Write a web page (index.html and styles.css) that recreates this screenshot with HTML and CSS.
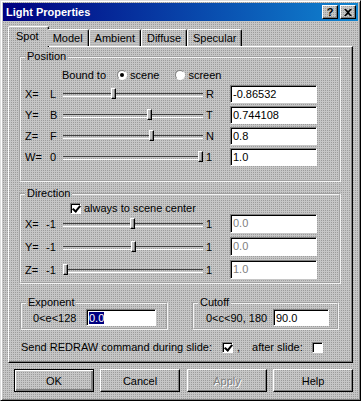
FILE: index.html
```html
<!DOCTYPE html>
<html lang="en">
<head>
    <meta charset="UTF-8">
    <title>Light Properties</title>
    <link rel="stylesheet" href="styles.css">
</head>
<body>
    <div class="window dither">
        <div class="titlebar">
            <span class="title">Light Properties</span>
            <div class="caption-btns">
                <span class="cap-btn dither">?</span>
                <span class="cap-btn dither close">
                    <svg width="8" height="7" viewBox="0 0 8 7"><path d="M0 0h2l2 2 2-2h2L5 3.5 8 7H6L4 5 2 7H0l3-3.5z" fill="#000"/></svg>
                </span>
            </div>
        </div>

        <div class="tabs">
            <div class="tab active dither">Spot</div>
            <div class="tab dither">Model</div>
            <div class="tab dither">Ambient</div>
            <div class="tab dither">Diffuse</div>
            <div class="tab dither">Specular</div>
        </div>

        <div class="panel dither">
            <fieldset class="group position">
                <legend>Position</legend>
                <div class="bound">
                    <span class="bound-label">Bound to</span>
                    <span class="radio checked"></span><span class="opt">scene</span>
                    <span class="radio"></span><span class="opt">screen</span>
                </div>
                <div class="row">
                    <span class="axis">X=</span><span class="lo">L</span>
                    <div class="slider"><span class="thumb" style="left:48px"></span></div>
                    <span class="hi">R</span>
                    <div class="field">-0.86532</div>
                </div>
                <div class="row">
                    <span class="axis">Y=</span><span class="lo">B</span>
                    <div class="slider"><span class="thumb" style="left:84px"></span></div>
                    <span class="hi">T</span>
                    <div class="field">0.744108</div>
                </div>
                <div class="row">
                    <span class="axis">Z=</span><span class="lo">F</span>
                    <div class="slider"><span class="thumb" style="left:86px"></span></div>
                    <span class="hi">N</span>
                    <div class="field">0.8</div>
                </div>
                <div class="row">
                    <span class="axis">W=</span><span class="lo">0</span>
                    <div class="slider"><span class="thumb" style="left:135px"></span></div>
                    <span class="hi">1</span>
                    <div class="field">1.0</div>
                </div>
            </fieldset>

            <fieldset class="group direction">
                <legend>Direction</legend>
                <div class="center-row">
                    <span class="check checked"></span><span class="opt">always to scene center</span>
                </div>
                <div class="row">
                    <span class="axis">X=</span><span class="lo">-1</span>
                    <div class="slider"><span class="thumb" style="left:67px"></span></div>
                    <span class="hi">1</span>
                    <div class="field disabled dither">0.0</div>
                </div>
                <div class="row">
                    <span class="axis">Y=</span><span class="lo">-1</span>
                    <div class="slider"><span class="thumb" style="left:68px"></span></div>
                    <span class="hi">1</span>
                    <div class="field disabled dither">0.0</div>
                </div>
                <div class="row">
                    <span class="axis">Z=</span><span class="lo">-1</span>
                    <div class="slider"><span class="thumb" style="left:0px"></span></div>
                    <span class="hi">1</span>
                    <div class="field disabled dither">1.0</div>
                </div>
            </fieldset>

            <div class="pair">
                <fieldset class="group small exponent">
                    <legend>Exponent</legend>
                    <div class="small-row">
                        <span class="range">0&lt;e&lt;128</span>
                        <div class="field"><span class="selected">0.0</span></div>
                    </div>
                </fieldset>
                <fieldset class="group small cutoff">
                    <legend>Cutoff</legend>
                    <div class="small-row">
                        <span class="range">0&lt;c&lt;90, 180</span>
                        <div class="field">90.0</div>
                    </div>
                </fieldset>
            </div>

            <div class="redraw">
                <span>Send REDRAW command during slide:</span>
                <span class="check checked during"></span>
                <span class="comma">,</span>
                <span>after slide:</span>
                <span class="check after"></span>
            </div>
        </div>

        <div class="buttons">
            <div class="btn default dither">OK</div>
            <div class="btn dither">Cancel</div>
            <div class="btn disabled dither">Apply</div>
            <div class="btn dither">Help</div>
        </div>
    </div>
</body>
</html>
```

FILE: styles.css
```css
* {
    margin: 0;
    padding: 0;
    box-sizing: border-box;
}

body {
    background-color: #c0c0c0;
    font-family: 'Liberation Sans', Arial, sans-serif;
    font-size: 11px;
    color: #000000;
}

.dither {
    background-color: #c6c6c6;
    background-image: conic-gradient(#9c9c9c 25%, transparent 0);
    background-size: 2px 2px;
    background-attachment: fixed;
}

.window {
    width: 361px;
    height: 401px;
    border: 1px solid;
    border-color: #dfdfdf #000000 #000000 #dfdfdf;
    box-shadow: inset 1px 1px 0 #ffffff, inset -1px -1px 0 #808080;
    padding: 2px;
    display: flex;
    flex-direction: column;
}

/* title bar */
.titlebar {
    height: 18px;
    flex-shrink: 0;
    background: linear-gradient(90deg, #000080, #1084d0);
    display: flex;
    align-items: center;
    justify-content: space-between;
    padding: 0 2px 0 3px;
}

.title {
    color: #ffffff;
    font-weight: bold;
    font-size: 11px;
}

.caption-btns {
    display: flex;
    gap: 2px;
}

.cap-btn {
    width: 16px;
    height: 14px;
    border: 1px solid;
    border-color: #ffffff #000000 #000000 #ffffff;
    box-shadow: inset -1px -1px 0 #808080;
    display: flex;
    align-items: center;
    justify-content: center;
    font-weight: bold;
    font-size: 11px;
    line-height: 1;
}

/* tabs */
.tabs {
    height: 25px;
    flex-shrink: 0;
    display: flex;
    align-items: flex-end;
    padding-left: 5px;
    position: relative;
    z-index: 1;
}

.tab {
    height: 17px;
    padding: 2px 5px 0 5px;
    border: 1px solid;
    border-bottom: none;
    border-color: #ffffff #000000 transparent #ffffff;
    border-radius: 2px 2px 0 0;
    box-shadow: inset -1px 0 0 #808080;
}

.tab.active {
    height: 21px;
    margin-bottom: -1px;
    padding: 3px 9px 0 7px;
    margin-right: -2px;
}

.tab.active + .tab {
    border-left: none;
    padding-left: 6px;
}

/* main panel */
.panel {
    margin: 0 5px;
    height: 317px;
    flex-shrink: 0;
    border: 1px solid;
    border-color: #ffffff #000000 #000000 #ffffff;
    box-shadow: inset -1px -1px 0 #808080;
    padding: 0 0 0 10px;
}

.group {
    border: 2px groove #f4f4f4;
    width: 322px;
}

.group legend {
    margin-left: 4px;
    padding: 0 2px;
    line-height: 13px;
}

.position {
    margin-top: 3px;
    padding: 5px 0 0 0;
    height: 132px;
}

.direction {
    margin-top: 5px;
    padding: 0;
    height: 97px;
}

.bound {
    display: flex;
    align-items: center;
    height: 14px;
    padding-left: 41px;
}

.bound-label {
    margin-right: 11px;
}

.opt {
    margin-left: 3px;
}

.radio + .opt + .radio {
    margin-left: 16px;
}

.radio {
    width: 10px;
    height: 10px;
    border-radius: 50%;
    border: 1px solid;
    border-color: #808080 #ffffff #ffffff #808080;
    background: #ffffff;
    position: relative;
}

.radio.checked::after {
    content: '';
    position: absolute;
    left: 2px;
    top: 2px;
    width: 4px;
    height: 4px;
    border-radius: 50%;
    background: #000000;
}

.check {
    width: 11px;
    height: 11px;
    background: #ffffff;
    border: 1px solid;
    border-color: #808080 #ffffff #ffffff #808080;
    box-shadow: inset 1px 1px 0 #000000;
    position: relative;
    display: inline-block;
    flex-shrink: 0;
}

.check.checked::after {
    content: '';
    position: absolute;
    left: 3px;
    top: 0px;
    width: 3px;
    height: 6px;
    border: solid #000000;
    border-width: 0 2px 2px 0;
    transform: rotate(40deg);
}

.center-row {
    display: flex;
    align-items: center;
    height: 12px;
    padding-left: 49px;
    margin-top: 2px;
}

.row {
    display: flex;
    align-items: center;
    height: 18px;
    margin-top: 3px;
    padding-left: 4px;
}

.position .row:first-of-type {
    margin-top: 4px;
}

.direction .row {
    height: 19px;
    margin-top: 4px;
}

.direction .center-row + .row {
    margin-top: 0;
}

.axis {
    width: 25px;
}

.lo {
    width: 13px;
}

.direction .lo {
    margin-left: -4px;
    width: 17px;
}

.slider {
    width: 140px;
    height: 18px;
    position: relative;
}

.slider::before {
    content: '';
    position: absolute;
    left: 0;
    right: 0;
    top: 8px;
    height: 2px;
    border-top: 1px solid #404040;
    border-bottom: 1px solid #ffffff;
}

.thumb {
    position: absolute;
    top: 3px;
    width: 5px;
    height: 11px;
    border: 1px solid;
    border-color: #ffffff #000000 #000000 #ffffff;
    background: #c0c0c0;
    box-shadow: inset -1px -1px 0 #808080;
}

.hi {
    width: 27px;
    padding-left: 3px;
}

.field {
    width: 87px;
    height: 100%;
    background: #ffffff;
    border: 1px solid;
    border-color: #808080 #ffffff #ffffff #808080;
    box-shadow: inset 1px 1px 0 #000000;
    padding: 2px 0 0 2px;
    white-space: nowrap;
}

.field.disabled {
    color: #808080;
    text-shadow: 1px 1px 0 #ffffff;
}

.pair {
    display: flex;
    gap: 24px;
    margin-top: 12px;
    padding-left: 1px;
}

.small {
    height: 34px;
    padding: 0;
}

.exponent {
    width: 148px;
}

.cutoff {
    width: 147px;
}

.small-row {
    display: flex;
    align-items: center;
    height: 17px;
}

.exponent .small-row {
    padding-left: 11px;
}

.cutoff .small-row {
    padding-left: 12px;
}

.exponent .range {
    width: 53px;
}

.cutoff .range {
    width: 67px;
}

.exponent .field {
    width: 70px;
}

.cutoff .field {
    width: 56px;
}

.selected {
    background: #000080;
    color: #ffffff;
}

.redraw {
    display: flex;
    align-items: center;
    height: 14px;
    margin-top: 10px;
    padding-left: 2px;
}

.redraw .during {
    margin-left: 10px;
}

.comma {
    margin: 0 12px 0 4px;
}

.redraw .after {
    margin-left: 9px;
}

/* bottom buttons */
.buttons {
    display: flex;
    gap: 6px;
    margin-top: 6px;
    padding-left: 11px;
}

.btn {
    width: 80px;
    height: 23px;
    border: 1px solid;
    border-color: #ffffff #000000 #000000 #ffffff;
    box-shadow: inset -1px -1px 0 #808080;
    display: flex;
    align-items: center;
    justify-content: center;
}

.btn.default {
    border: 1px solid #000000;
    box-shadow: inset 1px 1px 0 #ffffff, inset -2px -2px 0 #808080;
}

.btn.disabled {
    color: #808080;
    text-shadow: 1px 1px 0 #ffffff;
    margin-left: 1px;
}
```
